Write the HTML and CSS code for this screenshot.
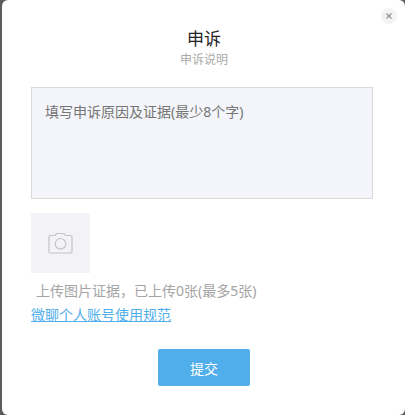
FILE: index.html
```html
<!DOCTYPE html>
<html lang="zh-CN">
<head>
    <meta charset="UTF-8">
    <meta name="viewport" content="width=device-width, initial-scale=1.0">
    <title>申诉</title>
    <link rel="stylesheet" href="styles.css">
</head>
<body>
<div class="dialog" role="dialog" aria-labelledby="dialog-title">
    <button type="button" class="close" aria-label="关闭">
        <svg width="6" height="6" viewBox="0 0 6 6">
            <path d="M0.5 0.5L5.5 5.5M5.5 0.5L0.5 5.5" stroke="#909090" stroke-width="1.1"/>
        </svg>
    </button>
    <div class="dialog-header">
        <h1 id="dialog-title">申诉</h1>
        <p>申诉说明</p>
    </div>
    <form class="appeal-form">
        <textarea class="reason" aria-label="申诉原因" placeholder="填写申诉原因及证据(最少8个字)"></textarea>
        <button type="button" class="upload" aria-label="上传图片">
            <svg width="25" height="22" viewBox="0 0 25 22" fill="none" stroke="#c4c4c6" stroke-width="1.2">
                <path d="M2.5 3.5H6.5Q7.5 3.5 7.8 2.5Q8.2 1.5 9.2 1.5H15.2Q16.2 1.5 16.7 2.5Q17 3.5 18 3.5H22.5Q24 3.5 24 5V19.5Q24 21 22.5 21H2.5Q1 21 1 19.5V5Q1 3.5 2.5 3.5Z"/>
                <circle cx="12.5" cy="11.8" r="5.3"/>
            </svg>
        </button>
        <p class="upload-info">上传图片证据，已上传0张(最多5张)</p>
        <a class="rules" href="#">微聊个人账号使用规范</a>
        <button type="submit" class="submit">提交</button>
    </form>
</div>
</body>
</html>
```
FILE: styles.css
```css
* {
    box-sizing: border-box;
}
body {
    margin: 0;
    padding-left: 2px;
    background-color: #5c5c5e;
    font-family: "Noto Sans", "Noto Sans CJK SC", sans-serif;
    font-size: 14px;
    line-height: 24px;
}
h1, p {
    margin: 0;
    font-weight: normal;
}
button {
    border: 0;
    padding: 0;
    font-family: inherit;
    cursor: pointer;
}
.dialog {
    position: relative;
    display: flex;
    flex-direction: column;
    min-height: 100vh;
    padding: 27px 32px 29px 29px;
    background-color: #fff;
    border-radius: 6px;
}
.close {
    position: absolute;
    top: 8px;
    right: 8px;
    display: flex;
    align-items: center;
    justify-content: center;
    width: 16px;
    height: 16px;
    border-radius: 50%;
    background-color: #f4f4f4;
}
.dialog-header {
    padding-left: 4px;
    text-align: center;
}
.dialog-header h1 {
    font-size: 17px;
    line-height: 24px;
    color: #222;
}
.dialog-header p {
    font-size: 12px;
    line-height: 18px;
    color: #aaa;
}
.appeal-form {
    display: flex;
    flex-direction: column;
    align-items: flex-start;
    margin-top: 18px;
}
.reason {
    width: 100%;
    height: 112px;
    padding: 12px 13px;
    border: 1px solid #dadadc;
    border-radius: 0;
    background-color: #f4f5fa;
    font-family: inherit;
    font-size: 14px;
    line-height: 24px;
    color: #333;
    resize: none;
    outline: none;
}
.reason::placeholder {
    color: #757575;
}
.upload {
    display: flex;
    align-items: center;
    justify-content: center;
    width: 59px;
    height: 60px;
    margin-top: 14px;
    background-color: #f2f2f7;
}
.upload-info {
    margin-top: 6px;
    padding-left: 5px;
    color: #a4a4a4;
}
.rules {
    color: #50aeea;
}
.submit {
    align-self: center;
    width: 92px;
    height: 37px;
    margin-top: 22px;
    margin-left: 4px;
    border-radius: 2px;
    background-color: #50aeea;
    font-size: 14px;
    color: #fff;
}
```
